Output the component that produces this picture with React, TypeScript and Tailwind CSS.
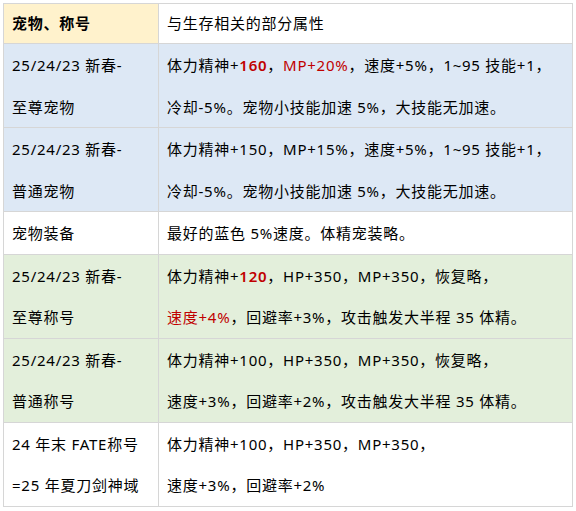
import React from "react";

type Part = { t: string; red?: boolean; bold?: boolean };
type Row = { name: string[]; lines: Part[][]; bg: string };

const R = (t: string, bold = false): Part => ({ t, red: true, bold });
const N = (t: string): Part => ({ t });

const rows: Row[] = [
  {
    name: ["25/24/23 新春-", "至尊宠物"],
    bg: "bg-[#dde8f5]",
    lines: [
      [N("体力精神+"), R("160", true), N("，"), R("MP+20%"), N("，速度+5%，1~95 技能+1，")],
      [N("冷却-5%。宠物小技能加速 5%，大技能无加速。")],
    ],
  },
  {
    name: ["25/24/23 新春-", "普通宠物"],
    bg: "bg-[#dde8f5]",
    lines: [
      [N("体力精神+150，MP+15%，速度+5%，1~95 技能+1，")],
      [N("冷却-5%。宠物小技能加速 5%，大技能无加速。")],
    ],
  },
  {
    name: ["宠物装备"],
    bg: "bg-white",
    lines: [[N("最好的蓝色 5%速度。体精宠装略。")]],
  },
  {
    name: ["25/24/23 新春-", "至尊称号"],
    bg: "bg-[#e3efdb]",
    lines: [
      [N("体力精神+"), R("120", true), N("，HP+350，MP+350，恢复略，")],
      [R("速度+4%"), N("，回避率+3%，攻击触发大半程 35 体精。")],
    ],
  },
  {
    name: ["25/24/23 新春-", "普通称号"],
    bg: "bg-[#e3efdb]",
    lines: [
      [N("体力精神+100，HP+350，MP+350，恢复略，")],
      [N("速度+3%，回避率+2%，攻击触发大半程 35 体精。")],
    ],
  },
  {
    name: ["24 年末 FATE称号", "=25 年夏刀剑神域"],
    bg: "bg-white",
    lines: [
      [N("体力精神+100，HP+350，MP+350，")],
      [N("速度+3%，回避率+2%")],
    ],
  },
];

function Line({ parts }: { parts: Part[] }) {
  return (
    <div className="h-[41.5px] leading-[43px] whitespace-nowrap">
      {parts.map((p, i) => (
        <span
          key={i}
          className={
            (p.red ? "text-[#c00000] " : "") + (p.bold ? "font-semibold" : "")
          }
        >
          {p.t}
        </span>
      ))}
    </div>
  );
}

export default function App() {
  return (
    <div
      className="bg-white min-h-[511px] p-[3px] text-[15px] text-black tracking-[0.75px]"
      style={{ fontFamily: '"Noto Sans", "Noto Sans CJK SC", sans-serif' }}
    >
      <table className="w-[570px] border-collapse table-fixed">
        <colgroup>
          <col className="w-[155px]" />
          <col />
        </colgroup>
        <tbody>
          <tr className="h-[40px]">
            <td className="border border-[#d6d6d6] bg-[#fff2cc] px-2 font-bold">
              宠物、称号
            </td>
            <td className="border border-[#d6d6d6] bg-white px-2">与生存相关的部分属性</td>
          </tr>
          {rows.map((r, i) => (
            <tr key={i} className={r.bg}>
              <td className="border border-[#d6d6d6] px-2 py-0 align-top">
                {r.name.map((n, j) => (
                  <div key={j} className="h-[41.5px] leading-[43px] whitespace-nowrap">
                    {n}
                  </div>
                ))}
              </td>
              <td className="border border-[#d6d6d6] px-2 py-0 align-top">
                {r.lines.map((l, j) => (
                  <Line key={j} parts={l} />
                ))}
              </td>
            </tr>
          ))}
        </tbody>
      </table>
    </div>
  );
}
